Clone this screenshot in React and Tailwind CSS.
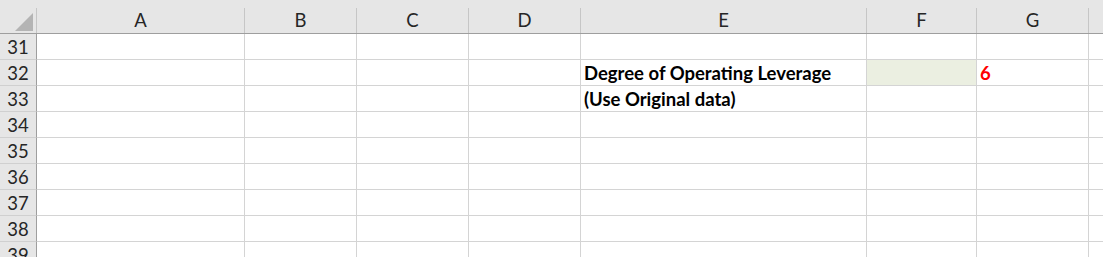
const cols = [
  { key: 'A', w: 'w-[208px]' },
  { key: 'B', w: 'w-[112px]' },
  { key: 'C', w: 'w-[112px]' },
  { key: 'D', w: 'w-[112px]' },
  { key: 'E', w: 'w-[286px]' },
  { key: 'F', w: 'w-[110px]' },
  { key: 'G', w: 'w-[112px]' },
]

const rows = [31, 32, 33, 34, 35, 36, 37, 38, 39]

function cellContent(row, col) {
  if (row === 32 && col === 'E') return <span className="font-bold text-black">Degree of Operating Leverage</span>
  if (row === 33 && col === 'E') return <span className="font-bold text-black">(Use Original data)</span>
  if (row === 32 && col === 'G') return <span className="font-bold text-[#ff0000]">6</span>
  return null
}

export default function App() {
  return (
    <div className="w-[1103px] h-[257px] overflow-hidden bg-white text-[18.5px] font-['Lato','Carlito','Liberation_Sans',sans-serif]">
      {/* column headers */}
      <div className="flex h-[34px] bg-[#e6e6e6] border-b border-[#9e9e9e]">
        <div className="w-[37px] shrink-0 flex items-end justify-end pr-[3px] pb-[2px] border-r border-[#c6c6c6] mt-[8px]">
          <div className="w-0 h-0 border-l-[18px] border-l-transparent border-b-[18px] border-b-[#b4b4b4]" />
        </div>
        {cols.map((c) => (
          <div
            key={c.key}
            className={`${c.w} shrink-0 mt-[8px] border-r border-[#c6c6c6] flex items-center justify-center text-[#262626] leading-none`}
          >
            {c.key}
          </div>
        ))}
        <div className="flex-1 mt-[8px]" />
      </div>

      {rows.map((r) => (
        <div key={r} className="flex h-[26px]">
          <div className="w-[37px] shrink-0 bg-[#e6e6e6] border-r border-[#9e9e9e] border-b border-b-[#d0d0d0] flex items-center justify-center text-[#262626] leading-none pt-[2px]">
            {r}
          </div>
          {cols.map((c) => (
            <div
              key={c.key}
              className={`${c.w} shrink-0 border-r border-b border-[#d4d4d4] flex items-center pl-[3px] pt-[2px] leading-none whitespace-nowrap ${
                r === 32 && c.key === 'F' ? 'bg-[#ebefe1]' : ''
              }`}
            >
              {cellContent(r, c.key)}
            </div>
          ))}
          <div className="flex-1 border-b border-[#d4d4d4]" />
        </div>
      ))}
    </div>
  )
}
